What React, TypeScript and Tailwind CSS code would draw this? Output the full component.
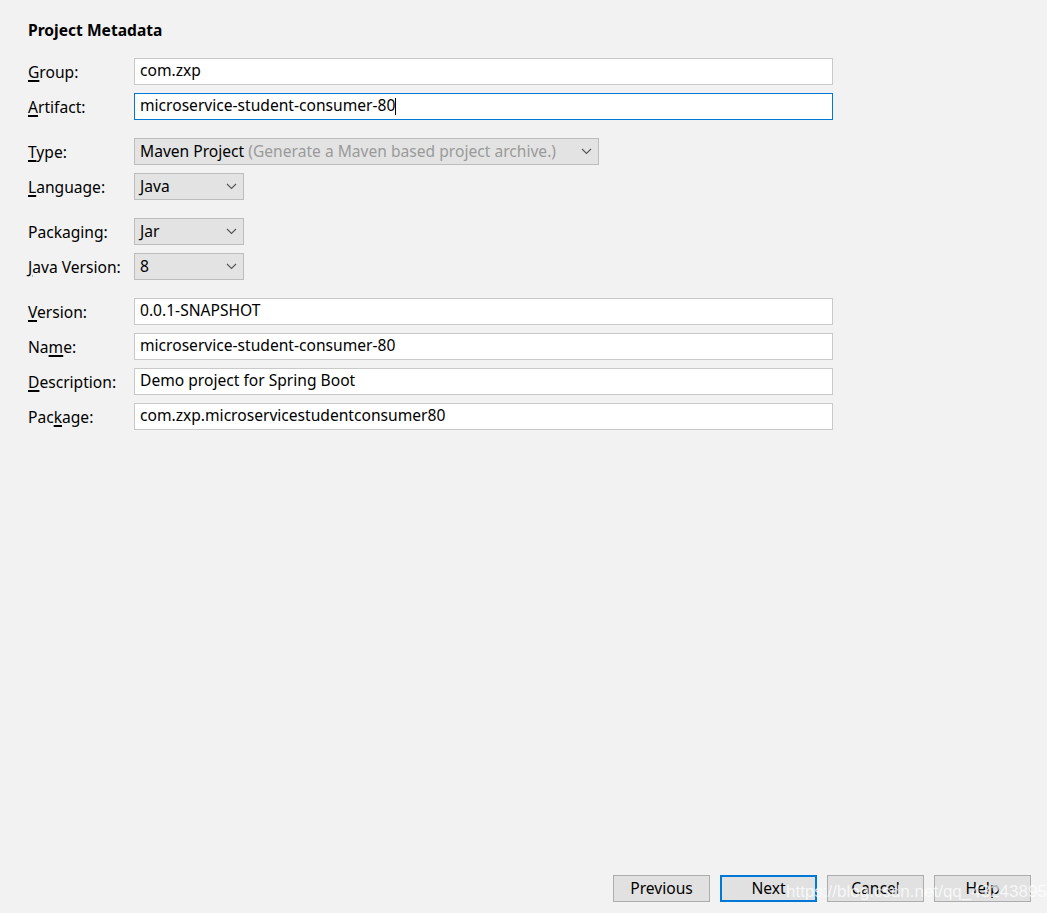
import React from "react";

const font = { fontFamily: '"Noto Sans", "Open Sans", sans-serif' };

function Label({ pre, u, post }: { pre: string; u: string; post: string }) {
  return (
    <div className="w-[106px] shrink-0 text-[15.6px] text-[#000] leading-[26px]">
      {pre}
      <span className="underline underline-offset-[2px] decoration-[1.5px]">{u}</span>
      {post}
    </div>
  );
}

function Chevron() {
  return (
    <svg width="11" height="7" viewBox="0 0 11 7" className="shrink-0">
      <polyline points="1,1 5.5,5.5 10,1" fill="none" stroke="#555" strokeWidth="1.1" />
    </svg>
  );
}

function TextInput({ value, focused }: { value: string; focused?: boolean }) {
  return (
    <div
      className={
        "w-[699px] h-[27px] bg-white flex items-center pl-[5px] pb-[1px] text-[15.6px] text-black border " +
        (focused ? "border-[#0078d7]" : "border-[#c9c9c9]")
      }
    >
      <span>{value}</span>
      {focused && <span className="inline-block w-px h-[17px] bg-black" />}
    </div>
  );
}

function Select({ width, children }: { width: string; children: React.ReactNode }) {
  return (
    <div
      className={
        width +
        " h-[27px] bg-[#e3e3e3] border border-[#bdbdbd] flex items-center justify-between pl-[5px] pr-[6px] text-[15.6px] text-black"
      }
    >
      <span className="whitespace-nowrap">{children}</span>
      <Chevron />
    </div>
  );
}

function Row({ label, children, className = "" }: { label: [string, string, string]; children: React.ReactNode; className?: string }) {
  return (
    <div className={"flex items-center " + className}>
      <Label pre={label[0]} u={label[1]} post={label[2]} />
      {children}
    </div>
  );
}

function Button({ children, primary }: { children: React.ReactNode; primary?: boolean }) {
  return (
    <div
      className={
        "w-[97px] h-[27px] bg-[#e1e1e1] flex items-center justify-center text-[15.6px] text-black " +
        (primary ? "border-2 border-[#0078d7]" : "border border-[#adadad]")
      }
    >
      {children}
    </div>
  );
}

export default function App() {
  return (
    <div className="w-[1047px] h-[913px] bg-[#f2f2f2] flex flex-col relative overflow-hidden" style={font}>
      <div className="pl-[28px] pt-[20px] flex flex-col">
        <div className="text-[15.6px] font-bold leading-[20px] text-black">Project Metadata</div>
        <div className="mt-[18px] flex flex-col">
          <Row label={["", "G", "roup:"]}>
            <TextInput value="com.zxp" />
          </Row>
          <Row label={["", "A", "rtifact:"]} className="mt-[8px]">
            <TextInput value="microservice-student-consumer-80" focused />
          </Row>
          <Row label={["", "T", "ype:"]} className="mt-[18px]">
            <Select width="w-[465px]">
              Maven Project <span className="text-[#9a9a9a]">(Generate a Maven based project archive.)</span>
            </Select>
          </Row>
          <Row label={["", "L", "anguage:"]} className="mt-[8px]">
            <Select width="w-[110px]">Java</Select>
          </Row>
          <Row label={["Packa", "g", "ing:"]} className="mt-[18px]">
            <Select width="w-[110px]">Jar</Select>
          </Row>
          <Row label={["", "J", "ava Version:"]} className="mt-[8px]">
            <Select width="w-[110px]">8</Select>
          </Row>
          <Row label={["", "V", "ersion:"]} className="mt-[18px]">
            <TextInput value="0.0.1-SNAPSHOT" />
          </Row>
          <Row label={["Na", "m", "e:"]} className="mt-[8px]">
            <TextInput value="microservice-student-consumer-80" />
          </Row>
          <Row label={["", "D", "escription:"]} className="mt-[8px]">
            <TextInput value="Demo project for Spring Boot" />
          </Row>
          <Row label={["Pac", "k", "age:"]} className="mt-[8px]">
            <TextInput value="com.zxp.microservicestudentconsumer80" />
          </Row>
        </div>
      </div>
      <div className="mt-auto flex justify-end gap-[10px] pr-[16px] pb-[11px]">
        <Button>Previous</Button>
        <Button primary>Next</Button>
        <Button>Cancel</Button>
        <Button>Help</Button>
      </div>
      <div
        className="absolute left-[786px] top-[879px] text-[17px] text-white/75 pointer-events-none whitespace-nowrap"
        style={{ fontFamily: '"Liberation Sans", sans-serif' }}
      >
        https://blog.csdn.net/qq_43243895
      </div>
    </div>
  );
}
